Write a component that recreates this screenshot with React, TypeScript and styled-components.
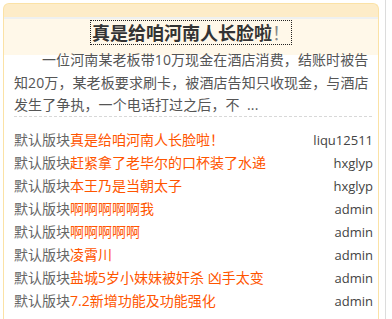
import React from "react";
import styled, { createGlobalStyle } from "styled-components";

const GlobalStyle = createGlobalStyle`
  html, body { margin: 0; padding: 0; background: #fff; }
  body { font-family: "Noto Sans CJK SC", sans-serif; }
`;

const Page = styled.div`
  width: 386px;
  height: 319px;
  border-right: 1px solid #dcdcdc;
  padding: 3px 0 0 3px;
  box-sizing: border-box;
  overflow: hidden;
`;

const Box = styled.div`
  width: 376px;
  height: 330px;
  box-sizing: border-box;
  border: 1px solid #fbe2a6;
  border-bottom: none;
  border-radius: 6px 6px 0 0;
  background: linear-gradient(
    #fdecc8 0 13px,
    #eef0f0 13px 15px,
    #fff8e9 15px 51px,
    #fff 51px
  );
`;

const Title = styled.h2`
  margin: 0;
  padding-top: 16px;
  text-align: center;
  font-size: 18px;
  line-height: 23px;
  font-weight: bold;
  color: #333;
`;

const TitleLink = styled.a`
  display: inline-block;
  border: 1px dotted #222;
  padding: 0 1px;
  color: inherit;
  text-decoration: none;
  span { font-weight: normal; color: #888; }
`;

const Summary = styled.p`
  margin: 4px 6px 0 10px;
  border-bottom: 1px dashed #d8d8d8;
  text-indent: 2em;
  font-family: "Open Sans", "Noto Sans CJK SC", sans-serif;
  font-size: 14px;
  line-height: 22.5px;
  letter-spacing: 0.1px;
  word-break: break-all;
  color: #555;
  height: 67px;
`;

const List = styled.ul`
  list-style: none;
  margin: 0;
  padding: 11px 5px 0 10px;
`;

const Row = styled.li`
  display: flex;
  justify-content: space-between;
  align-items: baseline;
  height: 23px;
  line-height: 23px;
  font-size: 14px;
`;

const Topic = styled.span`
  color: #666;
  font-family: "Open Sans", "Noto Sans CJK SC", sans-serif;
  a { color: #ff5500; text-decoration: none; }
`;

const User = styled.span`
  font-family: "Open Sans", sans-serif;
  font-size: 13px;
  color: #444;
`;

const rows = [
  { title: "真是给咱河南人长脸啦！", user: "liqu12511" },
  { title: "赶紧拿了老毕尔的口杯装了水递", user: "hxglyp" },
  { title: "本王乃是当朝太子", user: "hxglyp" },
  { title: "啊啊啊啊啊我", user: "admin" },
  { title: "啊啊啊啊啊", user: "admin" },
  { title: "凌霄川", user: "admin" },
  { title: "盐城5岁小妹妹被奸杀 凶手太变", user: "admin" },
  { title: "7.2新增功能及功能强化", user: "admin" },
];

export default function App() {
  return (
    <>
      <GlobalStyle />
      <Page>
        <Box>
          <Title>
            <TitleLink href="#">真是给咱河南人长脸啦<span>！</span></TitleLink>
          </Title>
          <Summary>
            一位河南某老板带10万现金在酒店消费，结账时被告知20万，某老板要求刷卡，被酒店告知只收现金，与酒店发生了争执，一个电话打过之后，不 &nbsp;...
          </Summary>
          <List>
            {rows.map((r, i) => (
              <Row key={i}>
                <Topic>默认版块<a href="#">{r.title}</a></Topic>
                <User>{r.user}</User>
              </Row>
            ))}
          </List>
        </Box>
      </Page>
    </>
  );
}
